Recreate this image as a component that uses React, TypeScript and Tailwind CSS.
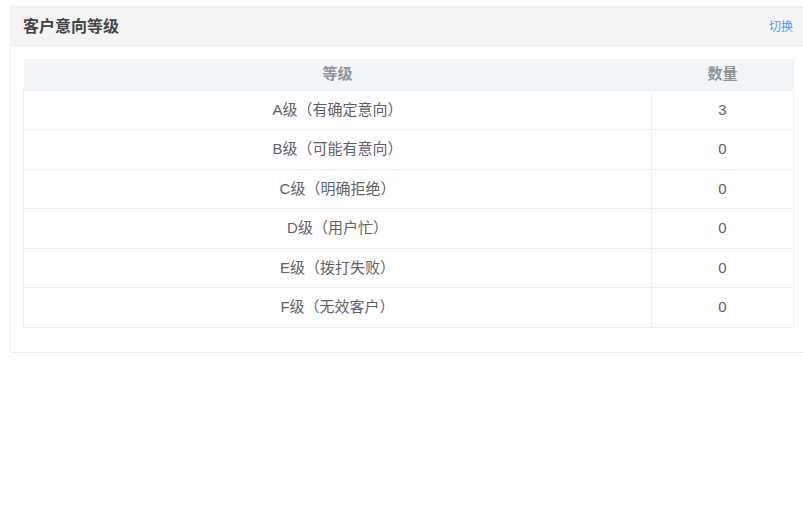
const rows = [
  { level: 'A级（有确定意向）', count: 3 },
  { level: 'B级（可能有意向）', count: 0 },
  { level: 'C级（明确拒绝）', count: 0 },
  { level: 'D级（用户忙）', count: 0 },
  { level: 'E级（拨打失败）', count: 0 },
  { level: 'F级（无效客户）', count: 0 },
]

export default function App() {
  return (
    <div className="w-[803px] h-[510px] bg-white overflow-hidden pt-[6px] pl-[10px]" style={{ fontFamily: '"Liberation Sans", "Noto Sans CJK SC", sans-serif' }}>
      <div className="w-[797px] border border-[#ebeef5] bg-white">
        {/* header */}
        <div className="h-[40px] bg-[#f4f4f4] flex items-center justify-between pl-[12px] pr-[13px]">
          <span className="text-[16px] font-bold text-[#444] leading-none">客户意向等级</span>
          <span className="text-[12px] text-[#409eff] leading-none cursor-pointer">切换</span>
        </div>

        <div className="pt-[12px] pb-[24px] pl-[12px] pr-[12px]">
          <table className="w-[771px] border-collapse text-[15px]">
            <thead>
              <tr className="bg-[#f2f5f8] h-[31px]">
                <th className="font-bold text-[#909399] text-center p-0 w-[628px]">等级</th>
                <th className="font-bold text-[#909399] text-center p-0">数量</th>
              </tr>
            </thead>
            <tbody>
              {rows.map(r => (
                <tr key={r.level} className="h-[39.5px]">
                  <td className="border border-[#ebeef5] text-center text-[#606266] p-0">{r.level}</td>
                  <td className="border border-[#ebeef5] text-center text-[#606266] p-0">{r.count}</td>
                </tr>
              ))}
            </tbody>
          </table>
        </div>
      </div>
    </div>
  )
}
